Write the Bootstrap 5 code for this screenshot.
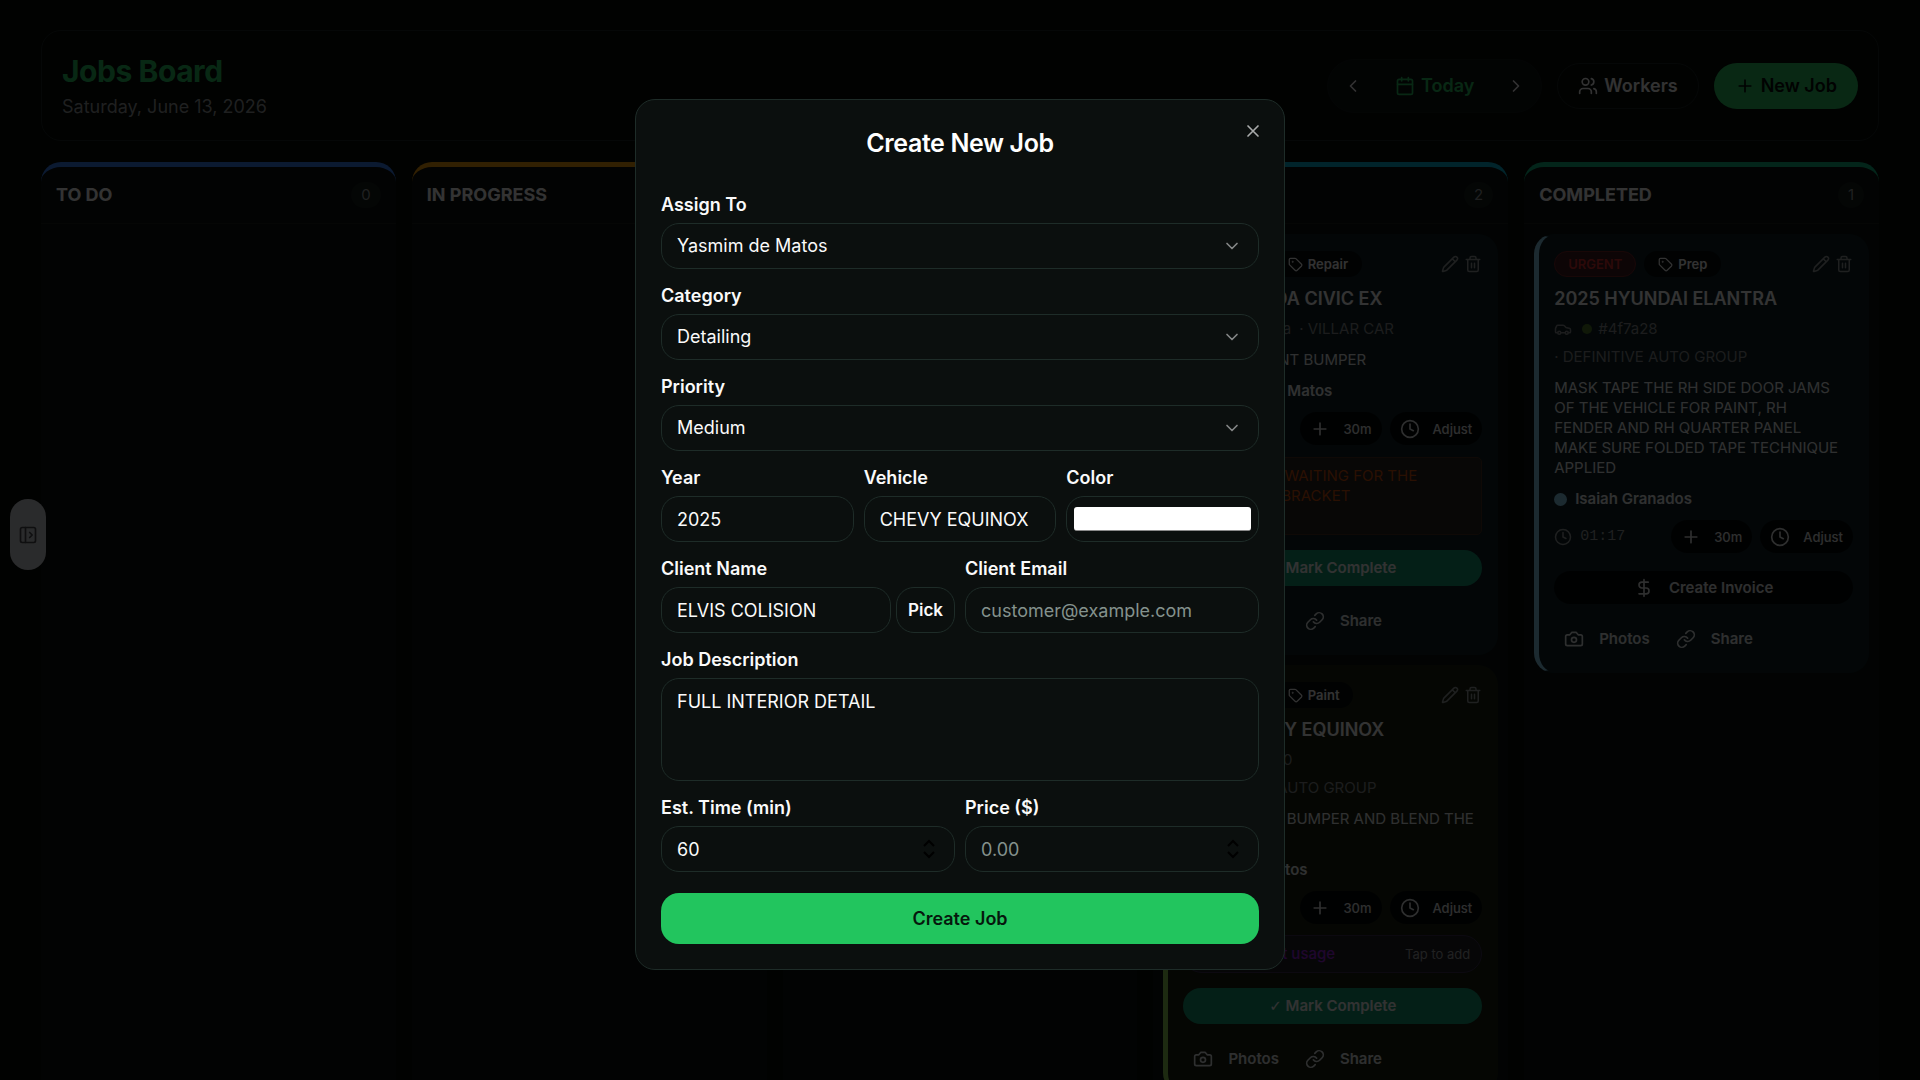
<!DOCTYPE html>
<html lang="en" data-bs-theme="dark">
<head>
<meta charset="utf-8">
<meta name="viewport" content="width=device-width, initial-scale=1">
<title>Jobs Board</title>
<link href="https://cdn.jsdelivr.net/npm/bootstrap@5.3.0/dist/css/bootstrap.min.css" rel="stylesheet">
<style>
  :root { --ink: #fafafa; --muted: #9a9e9f; --page: #050a08; --line: #1e2c28; --brand: #22c55e; }
  body { background: var(--page); color: var(--ink); font-family: Inter, "Liberation Sans", sans-serif; font-size: 15px; line-height: 20px; }
  .ico { width: 20px; height: 20px; flex: none; fill: none; stroke: currentColor; stroke-width: 2; stroke-linecap: round; stroke-linejoin: round; }
  .ico-s { width: 18px; height: 18px; }
  .ico-xs { width: 15px; height: 15px; }
  button { font-family: inherit; }

  /* board */
  .board-page { padding: 30px 41px; }
  .board-head { border: 1px solid #1c2523; border-radius: 20px; padding: 20px; margin-bottom: 21px; }
  .board-title { font-size: 30px; line-height: 40px; font-weight: 700; letter-spacing: -0.015em; color: #2cc765; margin: 0 0 3px; }
  .board-date { font-size: 18px; line-height: 26px; color: var(--muted); margin: 0; }
  .pill { display: inline-flex; align-items: center; justify-content: center; gap: 6px; height: 46px; padding: 0 20px; border: 1px solid transparent; border-radius: 23px; background: none; color: inherit; font-size: 18px; font-weight: 600; }
  .pill-step { width: 44px; padding: 0; }
  .pill-today { color: #2cc765; padding: 0 19px; }
  .pill-line { border-color: #1c2523; }
  .pill-solid { background: #2fc766; color: #050a08; }
  .head-tools { gap: 15px; }
  .date-nav { padding: 3px; border: 1px solid #121a18; border-radius: 27px; background: #0e1513; }
  .board-cols { display: grid; grid-template-columns: repeat(5, minmax(0, 1fr)); gap: 16px; min-height: 1000px; }
  .lane { border-top: 5px solid var(--lane); border-radius: 20px 20px 0 0; background: #0b110f; }
  .lane-head { padding: 15px; border-bottom: 1px solid #191f1d; }
  .lane-head h2 { font-size: 18px; line-height: 26px; font-weight: 700; margin: 0; }
  .lane-count { min-width: 26px; padding: 0 10px; border-radius: 13px; background: #171e1c; color: var(--muted); line-height: 26px; }
  .lane-body { padding: 10px; display: flex; flex-direction: column; gap: 10px; }

  /* job cards */
  .job { border: 1px solid transparent; border-left: 5px solid var(--who); border-radius: 20px; padding: 16px 15px 17px; background: var(--tint); }
  .job-blue { --who: #8cd0ee; --tint: #0f2126; }
  .job-green { --who: #90d058; --tint: #1a2112; }
  .chip { display: inline-flex; align-items: center; gap: 5px; height: 26px; padding: 0 13px; border: 1px solid transparent; border-radius: 13px; background: #060b0c; font-size: 13px; font-weight: 600; }
  .chip-red { background: #401c1e; border-color: #7a2427; color: #dc3030; }
  .chip-med { color: #eab308; }
  .tools { gap: 5px; }
  .tool { padding: 0; border: 0; background: none; color: var(--muted); display: flex; }
  .job h3 { font-size: 18px; line-height: 28px; font-weight: 600; margin: 8px 0 6px; }
  .job-meta { display: flex; flex-wrap: wrap; align-items: center; gap: 8px; color: #8a8e8f; }
  .dotmark { width: 10px; height: 10px; border-radius: 50%; background: var(--c); flex: none; margin: 0 -2px 0 2px; }
  .job-text { margin: 11px 0; padding-right: 4px; color: #eceff0; }
  .job-who { display: flex; align-items: center; gap: 8px; font-weight: 600; color: #eceff0; }
  .job-who i { width: 13px; height: 13px; border-radius: 50%; background: var(--who); }
  .job-time { display: flex; align-items: center; gap: 8px; margin-top: 11px; color: #9a9e9f; }
  .clock { font-family: "Liberation Mono", monospace; margin-right: auto; }
  .mini { display: inline-flex; align-items: center; justify-content: center; gap: 13px; height: 33px; padding: 0 10px; border: 0; border-radius: 17px; background: #040707; color: #e6e9ea; font-size: 13px; font-weight: 500; }
  .mini-wide { width: 100%; gap: 15px; margin-top: 18px; font-size: 15px; font-weight: 600; }
  .mini-bare { background: none; gap: 15px; font-size: 15px; font-weight: 600; }
  .job-foot { display: flex; gap: 6px; margin-top: 18px; }
  .job-note { display: block; width: 100%; height: 78px; margin-top: 12px; padding: 8px 9px; border: 1px solid #4a3020; border-radius: 5px; background: #292422; color: #d0500c; resize: none; overflow: hidden; font: inherit; }
  .job-done { display: block; width: 100%; height: 36px; margin-top: 15px; border: 0; border-radius: 18px; background: #169c76; color: var(--ink); font-weight: 600; }
  .tickmark { font-family: "DejaVu Sans", sans-serif; }
  .job-usage { display: flex; align-items: center; justify-content: space-between; width: 100%; height: 38px; margin-top: 11px; padding: 0 11px 0 14px; border: 1px solid #3c3052; border-radius: 19px; background: #211f27; color: #9a1fe0; font-size: 15px; font-weight: 500; }
  .job-usage small { font-size: 13px; font-weight: 400; color: #a4a7a9; }
  .edge-tab { position: fixed; left: 10px; top: 499px; width: 36px; height: 71px; border: 0; border-radius: 18px; background: #d2d4d9; color: #4a4d52; display: flex; align-items: center; justify-content: center; padding: 0; }

  /* dialog */
  .modal-backdrop.show { opacity: .8; background: #000; }
  .job-dialog { max-width: 650px; margin-top: 99px; }
  .job-dialog .modal-content { background: #0b0f0e; border: 1px solid var(--line); border-radius: 20px; padding: 25px; color: var(--ink); }
  .dialog-title { font-size: 25px; line-height: 36px; font-weight: 600; letter-spacing: -0.015em; text-align: center; margin: 0 0 34px; }
  .dialog-close { position: absolute; right: 21px; top: 21px; padding: 0; border: 0; background: none; color: #a9abab; display: flex; }
  .field-grid { display: grid; gap: 17px 10px; grid-template-columns: repeat(6, minmax(0, 1fr)); }
  .span-6 { grid-column: span 6; } .span-3 { grid-column: span 3; } .span-2 { grid-column: span 2; }
  .field-grid label { display: block; font-size: 18px; line-height: 20px; font-weight: 600; margin-bottom: 8px; }
  .field-grid .form-control, .field-grid .form-select { height: 46px; padding: 0 15px; border: 1px solid var(--line); border-radius: 18px; background-color: #0b0f0e; color: var(--ink); font-size: 18px; line-height: 26px; }
  .field-grid .form-control::placeholder { color: #84928d; }
  .field-grid .form-select { background-image: url("data:image/svg+xml,%3Csvg xmlns='http://www.w3.org/2000/svg' viewBox='0 0 24 24' fill='none' stroke='%23858787' stroke-width='2' stroke-linecap='round' stroke-linejoin='round'%3E%3Cpath d='m6 9 6 6 6-6'/%3E%3C/svg%3E"); background-size: 20px 20px; background-position: right 16px center; }
  .field-grid textarea.form-control { height: 103px; padding: 10px 15px; resize: none; }
  .field-grid input[type=number] { appearance: textfield; background: #0b0f0e url("data:image/svg+xml,%3Csvg xmlns='http://www.w3.org/2000/svg' viewBox='0 0 14 22' fill='none' stroke='%23000' stroke-width='2'%3E%3Cpath d='M2 8 7 3 12 8M2 14 7 19 12 14'/%3E%3C/svg%3E") no-repeat right 18px center / 14px 22px; }
  .field-grid input::-webkit-inner-spin-button { appearance: none; margin: 0; }
  .field-grid input[type=color] { width: 100%; padding: 10px 7px; }
  .field-grid input::-webkit-color-swatch-wrapper { padding: 0; }
  .field-grid input::-webkit-color-swatch { border: 1px solid #8a8a8a; border-width: 0 0 1px; border-radius: 3px; }
  .name-row { gap: 5px; }
  .btn-pick { flex: none; width: 59px; padding: 0; border: 1px solid var(--line); border-radius: 18px; background: none; color: var(--ink); font-size: 17px; font-weight: 600; }
  .btn-create, .btn-create:hover { height: 51px; margin-top: 21px; border: 0; border-radius: 18px; background: #22c55e; color: #06180d; font-size: 18px; font-weight: 600; }
</style>
<script src="https://cdn.jsdelivr.net/npm/bootstrap@5.3.0/dist/js/bootstrap.bundle.min.js"></script>
</head>
<body class="modal-open overflow-hidden">

<svg class="d-none" xmlns="http://www.w3.org/2000/svg">
  <symbol id="i-left" viewBox="0 0 24 24"><path d="m15 18-6-6 6-6"/></symbol>
  <symbol id="i-right" viewBox="0 0 24 24"><path d="m9 18 6-6-6-6"/></symbol>
  <symbol id="i-cal" viewBox="0 0 24 24"><path d="M8 2v4M16 2v4M3 10h18"/><rect x="3" y="4" width="18" height="18" rx="2"/></symbol>
  <symbol id="i-users" viewBox="0 0 24 24"><path d="M18 21a8 8 0 0 0-16 0"/><circle cx="10" cy="8" r="5"/><path d="M22 20c0-3.370-2-6.500-4-8a5 5 0 0 0-.45-8.300"/></symbol>
  <symbol id="i-team" viewBox="0 0 24 24"><path d="M16 21v-2a4 4 0 0 0-4-4H6a4 4 0 0 0-4 4v2"/><circle cx="9" cy="7" r="4"/><path d="M22 21v-2a4 4 0 0 0-3-3.870M16 3.130a4 4 0 0 1 0 7.750"/></symbol>
  <symbol id="i-plus" viewBox="0 0 24 24"><path d="M5 12h14M12 5v14"/></symbol>
  <symbol id="i-tag" viewBox="0 0 24 24"><path d="M12.586 2.586A2 2 0 0 0 11.172 2H4a2 2 0 0 0-2 2v7.172a2 2 0 0 0 .586 1.414l8.704 8.704a2.426 2.426 0 0 0 3.420 0l6.580-6.580a2.426 2.426 0 0 0 0-3.420z"/><circle cx="7.500" cy="7.500" r=".5" fill="currentColor"/></symbol>
  <symbol id="i-pencil" viewBox="0 0 24 24"><path d="M21.174 6.812a1 1 0 0 0-3.986-3.987L3.842 16.174a2 2 0 0 0-.5.83l-1.321 4.352a.5.5 0 0 0 .623.622l4.353-1.320a2 2 0 0 0 .83-.497zM15 5l4 4"/></symbol>
  <symbol id="i-trash" viewBox="0 0 24 24"><path d="M3 6h18M19 6v14a2 2 0 0 1-2 2H7a2 2 0 0 1-2-2V6M8 6V4a2 2 0 0 1 2-2h4a2 2 0 0 1 2 2v2M10 11v6M14 11v6"/></symbol>
  <symbol id="i-car" viewBox="0 0 24 24"><path d="M19 17h2c.6 0 1-.4 1-1v-3c0-.9-.7-1.700-1.500-1.900C18.700 10.600 16 10 16 10s-1.300-1.400-2.200-2.300c-.5-.4-1.100-.7-1.800-.7H5c-.6 0-1.100.4-1.400.9l-1.400 2.900A3.700 3.700 0 0 0 2 12v4c0 .6.4 1 1 1h2M9 17h6"/><circle cx="7" cy="17" r="2"/><circle cx="17" cy="17" r="2"/></symbol>
  <symbol id="i-clock" viewBox="0 0 24 24"><circle cx="12" cy="12" r="10"/><path d="M12 6v6l4 2"/></symbol>
  <symbol id="i-dollar" viewBox="0 0 24 24"><path d="M12 2v20M17 5H9.500a3.500 3.500 0 0 0 0 7h5a3.500 3.500 0 0 1 0 7H6"/></symbol>
  <symbol id="i-camera" viewBox="0 0 24 24"><path d="M14.500 4h-5L7 7H4a2 2 0 0 0-2 2v9a2 2 0 0 0 2 2h16a2 2 0 0 0 2-2V9a2 2 0 0 0-2-2h-3z"/><circle cx="12" cy="13" r="3"/></symbol>
  <symbol id="i-link" viewBox="0 0 24 24"><path d="M10 13a5 5 0 0 0 7.540.54l3-3a5 5 0 0 0-7.070-7.070l-1.720 1.710"/><path d="M14 11a5 5 0 0 0-7.540-.54l-3 3a5 5 0 0 0 7.070 7.070l1.710-1.710"/></symbol>
  <symbol id="i-panel" viewBox="0 0 24 24"><rect x="3" y="3" width="18" height="18" rx="2"/><path d="M9 3v18M14 9l3 3-3 3"/></symbol>
  <symbol id="i-x" viewBox="0 0 24 24"><path d="M18 6 6 18M6 6l12 12"/></symbol>
</svg>

<main class="board-page">
  <header class="board-head d-flex align-items-center justify-content-between">
    <div>
      <h1 class="board-title">Jobs Board</h1>
      <p class="board-date">Saturday, June 13, 2026</p>
    </div>
    <div class="head-tools d-flex align-items-center">
      <div class="date-nav d-flex">
        <button class="pill pill-step" type="button" aria-label="Previous day"><svg class="ico"><use href="#i-left"/></svg></button>
        <button class="pill pill-today" type="button"><svg class="ico"><use href="#i-cal"/></svg>Today</button>
        <button class="pill pill-step" type="button" aria-label="Next day"><svg class="ico"><use href="#i-right"/></svg></button>
      </div>
      <button class="pill pill-line" type="button"><svg class="ico"><use href="#i-team"/></svg>Workers</button>
      <button class="pill pill-solid" type="button"><svg class="ico"><use href="#i-plus"/></svg>New Job</button>
    </div>
  </header>

  <div class="board-cols">
    <section class="lane" style="--lane:#3b82f6">
      <div class="lane-head d-flex justify-content-between"><h2>TO DO</h2><span class="lane-count">0</span></div>
    </section>
    <section class="lane" style="--lane:#f59e0b">
      <div class="lane-head d-flex justify-content-between"><h2>IN PROGRESS</h2></div>
    </section>
    <section class="lane" style="--lane:#a855f7">
      <div class="lane-head d-flex justify-content-between"><h2>ON HOLD</h2></div>
    </section>
    <section class="lane" style="--lane:#06b6d4">
      <div class="lane-head d-flex justify-content-between"><h2>REVIEW</h2><span class="lane-count">2</span></div>
      <div class="lane-body">
        <article class="job job-blue">
          <div class="d-flex align-items-center gap-2">
            <span class="chip chip-med">MEDIUM</span><span class="chip"><svg class="ico ico-xs"><use href="#i-tag"/></svg>Repair</span>
            <span class="tools d-flex ms-auto"><button class="tool" aria-label="Edit"><svg class="ico ico-s"><use href="#i-pencil"/></svg></button><button class="tool" aria-label="Delete"><svg class="ico ico-s"><use href="#i-trash"/></svg></button></span>
          </div>
          <h3>2025 HONDA CIVIC EX</h3>
          <div class="job-meta"><svg class="ico ico-s"><use href="#i-car"/></svg><span class="dotmark" style="--c:#3a4d8a"></span><span>#3a4d8a</span><span>· VILLAR CAR</span></div>
          <p class="job-text">INSTALL FRONT BUMPER</p>
          <div class="job-who"><i></i>Yasmim de Matos</div>
          <div class="job-time"><svg class="ico ico-s"><use href="#i-clock"/></svg><span class="clock">00:45</span><button class="mini"><svg class="ico"><use href="#i-plus"/></svg>30m</button><button class="mini"><svg class="ico"><use href="#i-clock"/></svg>Adjust</button></div>
          <textarea class="job-note" aria-label="Note" readonly>PROJECT IS WAITING FOR THE
MOUNTING BRACKET</textarea>
          <button class="job-done"><span class="tickmark">✓</span> Mark Complete</button>
          <div class="job-foot"><button class="mini mini-bare"><svg class="ico"><use href="#i-camera"/></svg>Photos</button><button class="mini mini-bare"><svg class="ico"><use href="#i-link"/></svg>Share</button></div>
        </article>
        <article class="job job-green">
          <div class="d-flex align-items-center gap-2">
            <span class="chip chip-med">MEDIUM</span><span class="chip"><svg class="ico ico-xs"><use href="#i-tag"/></svg>Paint</span>
            <span class="tools d-flex ms-auto"><button class="tool" aria-label="Edit"><svg class="ico ico-s"><use href="#i-pencil"/></svg></button><button class="tool" aria-label="Delete"><svg class="ico ico-s"><use href="#i-trash"/></svg></button></span>
          </div>
          <h3>2025 CHEVY EQUINOX</h3>
          <div class="job-meta"><svg class="ico ico-s"><use href="#i-car"/></svg><span class="dotmark" style="--c:#00a0b0"></span><span>#00a0b0</span><span class="w-100">· DEFINITIVE AUTO GROUP</span></div>
          <p class="job-text">PAINT FRONT BUMPER AND BLEND THE FENDERS</p>
          <div class="job-who"><i></i>Marcia Santos</div>
          <div class="job-time"><svg class="ico ico-s"><use href="#i-clock"/></svg><span class="clock">00:30</span><button class="mini"><svg class="ico"><use href="#i-plus"/></svg>30m</button><button class="mini"><svg class="ico"><use href="#i-clock"/></svg>Adjust</button></div>
          <button class="job-usage"><span>Add product usage</span><small>Tap to add</small></button>
          <button class="job-done"><span class="tickmark">✓</span> Mark Complete</button>
          <div class="job-foot"><button class="mini mini-bare"><svg class="ico"><use href="#i-camera"/></svg>Photos</button><button class="mini mini-bare"><svg class="ico"><use href="#i-link"/></svg>Share</button></div>
        </article>
      </div>
    </section>
    <section class="lane" style="--lane:#10b981">
      <div class="lane-head d-flex justify-content-between"><h2>COMPLETED</h2><span class="lane-count">1</span></div>
      <div class="lane-body">
        <article class="job job-blue">
          <div class="d-flex align-items-center gap-2">
            <span class="chip chip-red">URGENT</span><span class="chip"><svg class="ico ico-xs"><use href="#i-tag"/></svg>Prep</span>
            <span class="tools d-flex ms-auto"><button class="tool" aria-label="Edit"><svg class="ico ico-s"><use href="#i-pencil"/></svg></button><button class="tool" aria-label="Delete"><svg class="ico ico-s"><use href="#i-trash"/></svg></button></span>
          </div>
          <h3>2025 HYUNDAI ELANTRA</h3>
          <div class="job-meta"><svg class="ico ico-s"><use href="#i-car"/></svg><span class="dotmark" style="--c:#4f7a28"></span><span>#4f7a28</span><span class="w-100">· DEFINITIVE AUTO GROUP</span></div>
          <p class="job-text">MASK TAPE THE RH SIDE DOOR JAMS OF THE VEHICLE FOR PAINT, RH FENDER AND RH QUARTER PANEL<br>MAKE SURE FOLDED TAPE TECHNIQUE APPLIED</p>
          <div class="job-who"><i></i>Isaiah Granados</div>
          <div class="job-time"><svg class="ico ico-s"><use href="#i-clock"/></svg><span class="clock">01:17</span><button class="mini"><svg class="ico"><use href="#i-plus"/></svg>30m</button><button class="mini"><svg class="ico"><use href="#i-clock"/></svg>Adjust</button></div>
          <button class="mini mini-wide"><svg class="ico"><use href="#i-dollar"/></svg>Create Invoice</button>
          <div class="job-foot"><button class="mini mini-bare"><svg class="ico"><use href="#i-camera"/></svg>Photos</button><button class="mini mini-bare"><svg class="ico"><use href="#i-link"/></svg>Share</button></div>
        </article>
      </div>
    </section>
  </div>
</main>

<button class="edge-tab" type="button" aria-label="Open sidebar"><svg class="ico"><use href="#i-panel"/></svg></button>

<div class="modal-backdrop show"></div>
<div class="modal show d-block" tabindex="-1" role="dialog" aria-modal="true" aria-labelledby="dlgTitle">
  <div class="modal-dialog job-dialog">
    <div class="modal-content">
      <h2 class="dialog-title" id="dlgTitle">Create New Job</h2>
      <button class="dialog-close" type="button" aria-label="Close"><svg class="ico"><use href="#i-x"/></svg></button>
      <form>
        <div class="field-grid">
          <div class="span-6"><label for="assign">Assign To</label><select class="form-select" id="assign"><option>Yasmim de Matos</option><option>Isaiah Granados</option></select></div>
          <div class="span-6"><label for="cat">Category</label><select class="form-select" id="cat"><option>Detailing</option><option>Paint</option><option>Prep</option><option>Repair</option></select></div>
          <div class="span-6"><label for="prio">Priority</label><select class="form-select" id="prio"><option>Medium</option><option>Urgent</option></select></div>
          <div class="span-2"><label for="year">Year</label><input class="form-control" id="year" type="text" value="2025"></div>
          <div class="span-2"><label for="veh">Vehicle</label><input class="form-control" id="veh" type="text" value="CHEVY EQUINOX"></div>
          <div class="span-2"><label for="col">Color</label><input class="form-control" id="col" type="color" value="#ffffff"></div>
          <div class="span-3"><label for="cname">Client Name</label>
            <div class="name-row d-flex"><input class="form-control" id="cname" type="text" value="ELVIS COLISION"><button class="btn-pick" type="button">Pick</button></div></div>
          <div class="span-3"><label for="mail">Client Email</label><input class="form-control" id="mail" type="email" placeholder="customer@example.com"></div>
          <div class="span-6"><label for="desc">Job Description</label><textarea class="form-control" id="desc">FULL INTERIOR DETAIL</textarea></div>
          <div class="span-3"><label for="est">Est. Time (min)</label><input class="form-control" id="est" type="number" value="60"></div>
          <div class="span-3"><label for="price">Price ($)</label><input class="form-control" id="price" type="number" placeholder="0.00"></div>
        </div>
        <button class="btn btn-create w-100" type="button">Create Job</button>
      </form>
    </div>
  </div>
</div>
</body>
</html>
